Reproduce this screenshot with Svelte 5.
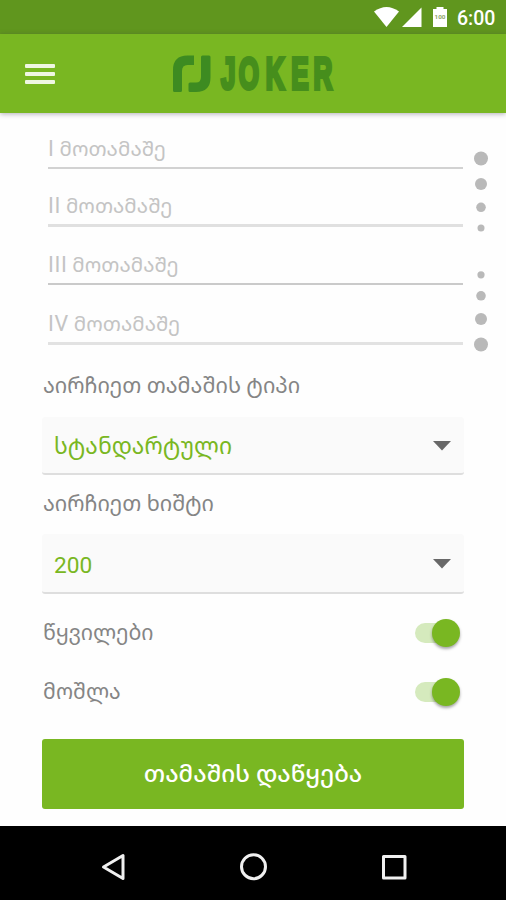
<script>
  const players = [
    { no: 'I', height: 56, line: 2, tone: '#d2d2d2' },
    { no: 'II', height: 58, line: 3, tone: '#e0e0e0' },
    { no: 'III', height: 58, line: 2, tone: '#cacaca' },
    { no: 'IV', height: 60, line: 3, tone: '#e2e2e2' }
  ];
  const dots = [
    { y: 158.5, r: 7 }, { y: 184, r: 6 }, { y: 207.3, r: 4.8 }, { y: 228, r: 3.5 },
    { y: 274.8, r: 3.6 }, { y: 295.8, r: 4.8 }, { y: 319, r: 6 }, { y: 344.5, r: 7 }
  ];
  let pairs = $state(true);
  let erase = $state(true);
</script>

<div class="screen">
  <div class="status">
    <svg width="76" height="34" viewBox="374 0 76 34" fill="#fff">
      <path d="M374 11.5Q386.5 2.500 399 11.500L386.500 27Z" />
      <path d="M402 27L421.500 7.500V27Z" />
      <path d="M433 9h3.500V7h7v2h3.500v18H433Z" />
      <text x="434.500" y="19" font-size="6" font-weight="700" fill="#8fa66b" textLength="11" lengthAdjust="spacingAndGlyphs">100</text>
    </svg>
    <span class="clock">6:00</span>
  </div>

  <header>
    <button class="menu" aria-label="menu"><i></i><i></i><i></i></button>
    <svg class="logo" width="170" height="70" viewBox="172 39 170 70">
      <g fill="#3d8b21">
        <path d="M173 90.500V70Q173 55.500 187.500 55.500H194V65H187.500Q182 65 182 71V90.500Q182 92 180.500 92H174.500Q173 92 173 90.500Z" />
        <path d="M201 57Q201 55.500 202.500 55.500H209Q210.500 55.500 210.500 57V77.500Q210.500 92 196 92H190Q188.500 92 188.500 90.500V84Q188.500 82.500 190 82.500H196Q201 82.500 201 77Z" />
      </g>
      <text class="brand" x="0 30 76 119 157" y="0" transform="translate(221 89) scale(.59 1)">JOKER</text>
    </svg>
  </header>

  <main>
    <section class="players">
      <div class="fields">
        {#each players as p}
          <div class="field" style="height:{p.height}px;border-bottom:{p.line}px solid {p.tone}"><span class="no">{p.no}</span><span>მოთამაშე</span></div>
        {/each}
      </div>
      <svg class="dots" width="20" height="210" viewBox="471 145 20 210" fill="#b9b9b9">
        {#each dots as d}<circle cx="481" cy={d.y} r={d.r} />{/each}
      </svg>
    </section>

    <div class="label first">აირჩიეთ თამაშის ტიპი</div>
    <div class="select one">
      <span>სტანდარტული</span>
      <svg width="18" height="10"><path d="M0 0H18L9 9.500Z" fill="#686868" /></svg>
    </div>
    <div class="label second">აირჩიეთ ხიშტი</div>
    <div class="select two">
      <span class="num">200</span>
      <svg width="18" height="10"><path d="M0 0H18L9 9.500Z" fill="#686868" /></svg>
    </div>

    <div class="row">
      <span>წყვილები</span>
      <button class="switch" class:on={pairs} aria-label="წყვილები" onclick={() => (pairs = !pairs)}><i></i></button>
    </div>
    <div class="row">
      <span>მოშლა</span>
      <button class="switch" class:on={erase} aria-label="მოშლა" onclick={() => (erase = !erase)}><i></i></button>
    </div>
    <button class="start">თამაშის დაწყება</button>
  </main>

  <nav>
    <svg width="506" height="74" viewBox="0 826 506 74" fill="none" stroke="#f0f0f0" stroke-width="3" stroke-linejoin="round">
      <path d="M103.500 867L123 855.500V878.500Z" />
      <circle cx="253.500" cy="866.700" r="12" />
      <rect x="383.500" y="856.500" width="21.500" height="21.500" />
    </svg>
  </nav>
</div>

<style>
  .screen {
    width: 506px;
    height: 900px;
    display: flex;
    flex-direction: column;
    overflow: hidden;
    background: #fefefe;
    font-family: Roboto, 'Noto Sans Georgian', 'Noto Sans', 'DejaVu Sans', sans-serif;
    color: #858585;
  }
  button { border: 0; padding: 0; font: inherit; }
  .status {
    height: 34px;
    flex: none;
    display: flex;
    padding-left: 374px;
    background: #60961e;
    color: #fff;
  }
  .clock { margin-left: 7px; font-size: 19.500px; font-weight: 500; line-height: 37px; }
  header {
    height: 79px;
    flex: none;
    display: flex;
    align-items: flex-start;
    background: #79b722;
    box-shadow: 0 1px 5px rgba(60, 50, 70, .4);
  }
  .menu {
    margin: 30px 0 0 25px;
    width: 30px;
    display: flex;
    flex-direction: column;
    gap: 4px;
    background: none;
  }
  .menu i { height: 4px; background: #eff7e2; border-radius: 1px; }
  .logo { margin: 5px 0 0 117px; }
  .brand {
    font: 700 44px 'Liberation Sans', sans-serif;
    fill: #468e1c;
    stroke: #468e1c;
    stroke-width: 4px;
  }
  main { flex: 1; padding: 0 42px; display: flex; flex-direction: column; }
  .players { display: flex; padding-left: 6px; margin-right: -42px; height: 232px; flex: none; }
  .fields { width: 415px; }
  .field { box-sizing: border-box; font-size: 20.600px; line-height: 26px; color: #c4c4c4; white-space: nowrap; display: flex; align-items: flex-end; padding-bottom: 5px; }
  .no { font-size: 21.500px; letter-spacing: .6px; margin-right: 5px; }
  .dots { margin: 32px 0 0 8px; }
  .label { padding-left: 1px; font-size: 21.600px; line-height: 30px; height: 30px; white-space: nowrap; flex: none; }
  .first { margin-top: 26px; }
  .second { margin-top: 14px; }
  .select {
    flex: none;
    box-sizing: border-box;
    display: flex;
    align-items: center;
    justify-content: space-between;
    padding: 1px 13px 0 12px;
    background: #fafafa;
    border-bottom: 2px solid #dedede;
    border-radius: 3px;
    color: #79b722;
    font-size: 22.850px;
  }
  .one { margin-top: 16px; height: 58px; }
  .two { margin-top: 15px; height: 60px; }
  .num { font-size: 22.700px; padding-top: 3px; }
  .row { display: flex; align-items: center; justify-content: space-between; height: 59px; padding: 0 4px 0 1px; font-size: 21.300px; flex: none; }
  .row > span { padding-bottom: 2px; }
  .two + .row { margin-top: 9px; }
  .switch { width: 45px; height: 28px; display: flex; align-items: center; background: none; position: relative; }
  .switch::before { content: ''; position: absolute; left: 0; top: 4px; width: 38px; height: 20px; border-radius: 10px; background: #d5eabd; }
  .switch i { position: relative; width: 28px; height: 28px; border-radius: 50%; background: #bbb; box-shadow: 0 2px 3px rgba(0, 0, 0, .35); }
  .switch.on i { margin-left: 17px; background: #79b722; }
  .start { flex: none; margin-top: 18px; height: 70px; padding-bottom: 4px; border-radius: 3px; background: #79b722; color: #fff; font-size: 24px; font-weight: 500; }
  nav { height: 74px; flex: none; background: #000; }
</style>
